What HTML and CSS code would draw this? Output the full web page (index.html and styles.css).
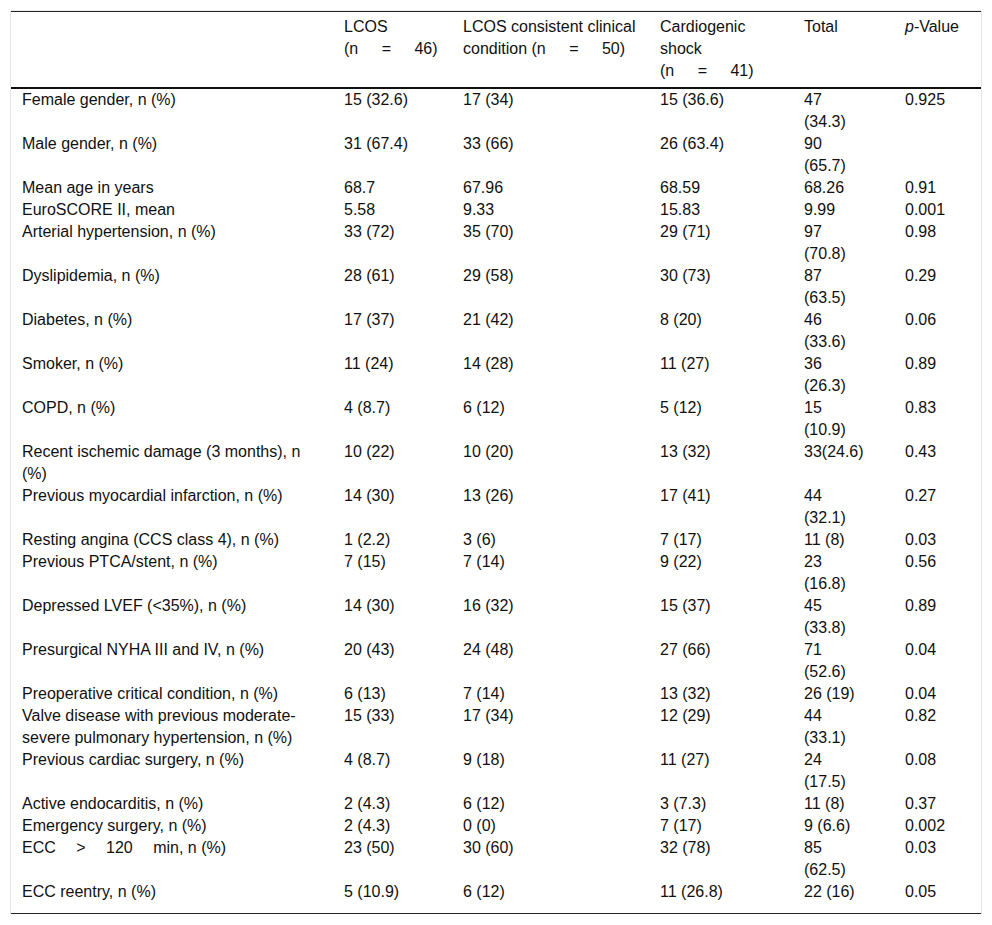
FILE: index.html
```html
<!DOCTYPE html>
<html lang="en">
<head>
<meta charset="utf-8">
<title>Table</title>
<link rel="stylesheet" href="styles.css">
</head>
<body>
<div class="wrap">
<table class="data">
<colgroup>
<col class="c1"><col class="c2"><col class="c3"><col class="c4"><col class="c5"><col class="c6">
</colgroup>
<thead>
<tr>
<th></th>
<th>LCOS <span class="n">(n = 46)</span></th>
<th>LCOS consistent clinical condition <span class="n">(n = 50)</span></th>
<th>Cardiogenic shock <span class="n">(n = 41)</span></th>
<th>Total</th>
<th><i>p</i>-Value</th>
</tr>
</thead>
<tbody>
<tr><td>Female gender, n (%)</td><td>15 (32.6)</td><td>17 (34)</td><td>15 (36.6)</td><td>47 (34.3)</td><td>0.925</td></tr>
<tr><td>Male gender, n (%)</td><td>31 (67.4)</td><td>33 (66)</td><td>26 (63.4)</td><td>90 (65.7)</td><td></td></tr>
<tr><td>Mean age in years</td><td>68.7</td><td>67.96</td><td>68.59</td><td>68.26</td><td>0.91</td></tr>
<tr><td>EuroSCORE II, mean</td><td>5.58</td><td>9.33</td><td>15.83</td><td>9.99</td><td>0.001</td></tr>
<tr><td>Arterial hypertension, n (%)</td><td>33 (72)</td><td>35 (70)</td><td>29 (71)</td><td>97 (70.8)</td><td>0.98</td></tr>
<tr><td>Dyslipidemia, n (%)</td><td>28 (61)</td><td>29 (58)</td><td>30 (73)</td><td>87 (63.5)</td><td>0.29</td></tr>
<tr><td>Diabetes, n (%)</td><td>17 (37)</td><td>21 (42)</td><td>8 (20)</td><td>46 (33.6)</td><td>0.06</td></tr>
<tr><td>Smoker, n (%)</td><td>11 (24)</td><td>14 (28)</td><td>11 (27)</td><td>36 (26.3)</td><td>0.89</td></tr>
<tr><td>COPD, n (%)</td><td>4 (8.7)</td><td>6 (12)</td><td>5 (12)</td><td>15 (10.9)</td><td>0.83</td></tr>
<tr><td>Recent ischemic damage (3 months), n (%)</td><td>10 (22)</td><td>10 (20)</td><td>13 (32)</td><td>33(24.6)</td><td>0.43</td></tr>
<tr><td>Previous myocardial infarction, n (%)</td><td>14 (30)</td><td>13 (26)</td><td>17 (41)</td><td>44 (32.1)</td><td>0.27</td></tr>
<tr><td>Resting angina (CCS class 4), n (%)</td><td>1 (2.2)</td><td>3 (6)</td><td>7 (17)</td><td>11 (8)</td><td>0.03</td></tr>
<tr><td>Previous PTCA/stent, n (%)</td><td>7 (15)</td><td>7 (14)</td><td>9 (22)</td><td>23 (16.8)</td><td>0.56</td></tr>
<tr><td>Depressed LVEF (&lt;35%), n (%)</td><td>14 (30)</td><td>16 (32)</td><td>15 (37)</td><td>45 (33.8)</td><td>0.89</td></tr>
<tr><td>Presurgical NYHA III and IV, n (%)</td><td>20 (43)</td><td>24 (48)</td><td>27 (66)</td><td>71 (52.6)</td><td>0.04</td></tr>
<tr><td>Preoperative critical condition, n (%)</td><td>6 (13)</td><td>7 (14)</td><td>13 (32)</td><td>26 (19)</td><td>0.04</td></tr>
<tr><td>Valve disease with previous moderate-severe pulmonary hypertension, n (%)</td><td>15 (33)</td><td>17 (34)</td><td>12 (29)</td><td>44 (33.1)</td><td>0.82</td></tr>
<tr><td>Previous cardiac surgery, n (%)</td><td>4 (8.7)</td><td>9 (18)</td><td>11 (27)</td><td>24 (17.5)</td><td>0.08</td></tr>
<tr><td>Active endocarditis, n (%)</td><td>2 (4.3)</td><td>6 (12)</td><td>3 (7.3)</td><td>11 (8)</td><td>0.37</td></tr>
<tr><td>Emergency surgery, n (%)</td><td>2 (4.3)</td><td>0 (0)</td><td>7 (17)</td><td>9 (6.6)</td><td>0.002</td></tr>
<tr><td><span class="f">ECC &gt; 120 min</span>, n (%)</td><td>23 (50)</td><td>30 (60)</td><td>32 (78)</td><td>85 (62.5)</td><td>0.03</td></tr>
<tr><td>ECC reentry, n (%)</td><td>5 (10.9)</td><td>6 (12)</td><td>11 (26.8)</td><td>22 (16)</td><td>0.05</td></tr>
</tbody>
</table>
</div>
</body>
</html>
```

FILE: styles.css
```css
html, body {
  margin: 0;
  padding: 0;
  background: #ffffff;
}

body {
  font-family: "Liberation Sans", Arial, sans-serif;
  font-size: 16px;
  color: #111111;
}

.wrap {
  margin: 10px 0 0 10px;
  width: 970px;
  border-left: 1px solid #e4e4e4;
  border-right: 1px solid #e4e4e4;
  border-top: 1px solid #ececec;
}

.data {
  width: 970px;
  table-layout: fixed;
  border-collapse: collapse;
  border-bottom: 1px solid #222;
}

.c1 { width: 322px; }
.c2 { width: 119px; }
.c3 { width: 197px; }
.c4 { width: 144px; }
.c5 { width: 101px; }
.c6 { width: 87px; }

.data th,
.data td {
  text-align: left;
  vertical-align: top;
  font-weight: normal;
  line-height: 22px;
  padding: 0 8px 0 11px;
}

.data th {
  padding-top: 4px;
  padding-bottom: 5px;
  border-top: 1px solid #222;
  border-bottom: 2px solid #111;
}

.data th:nth-child(1),
.data td:nth-child(1) { padding-right: 16px; }

.data th:nth-child(4),
.data td:nth-child(4) { padding-right: 20px; }

.data th:nth-child(5),
.data td:nth-child(5) { padding-right: 28px; }

.data tbody tr:last-child td {
  padding-bottom: 10px;
}

.n {
  white-space: nowrap;
  word-spacing: 19px;
}

.f {
  white-space: nowrap;
  word-spacing: 16px;
}
```
